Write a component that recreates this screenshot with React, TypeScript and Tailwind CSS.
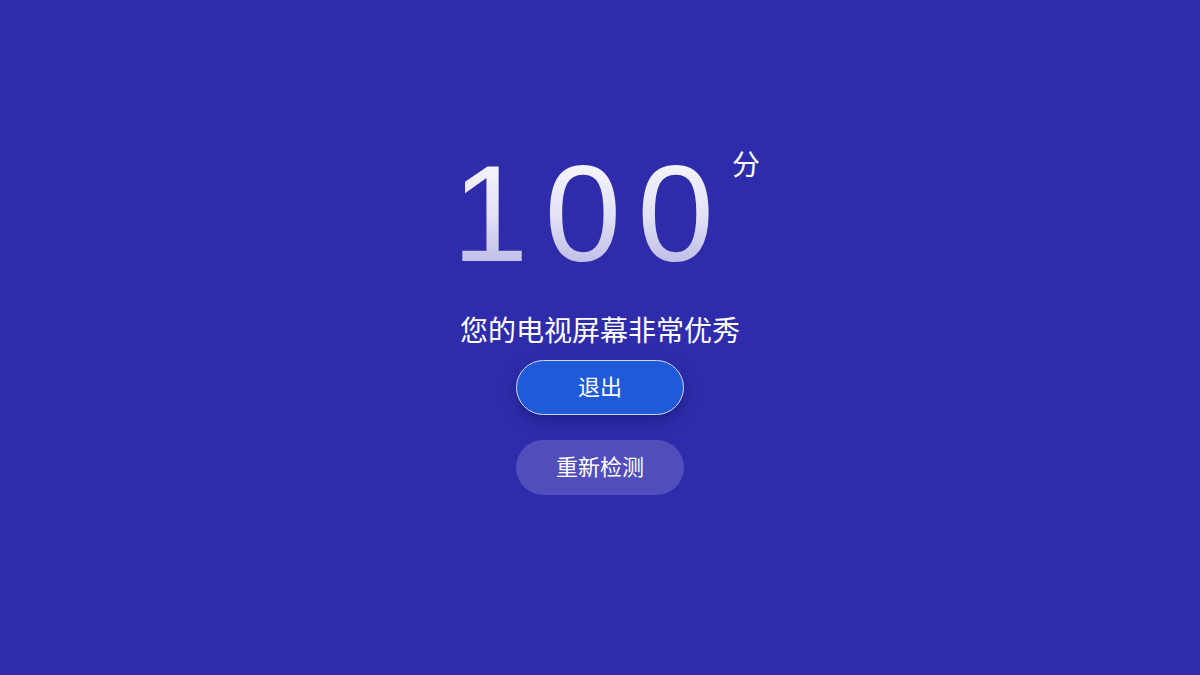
import React from "react";

export default function App() {
  return (
    <div
      className="w-[1200px] h-[675px] bg-[#2f2cab] flex flex-col items-center pt-[133px]"
      style={{ fontFamily: '"Liberation Sans", "Noto Sans CJK SC", sans-serif' }}
    >
      <div className="flex items-start ml-[12px]">
        <div className="text-[138px] leading-[160px] tracking-[16px] bg-gradient-to-b from-[#ffffff] via-[#e4e3f6] to-[#aba8de] bg-clip-text text-transparent">
          100
        </div>
        <div className="text-[28px] leading-[30px] text-white mt-[18px] ml-[2px]">分</div>
      </div>
      <div className="mt-[21px] text-[28px] leading-[36px] text-white">您的电视屏幕非常优秀</div>
      <div className="mt-[10px] flex flex-col gap-[25px]">
        <button className="w-[168px] h-[55px] rounded-full bg-[#1f5bd9] border-[1.5px] border-[#d0d8f5] text-white text-[22px] shadow-[0_6px_14px_rgba(10,10,80,0.35)]">
          退出
        </button>
        <button className="w-[168px] h-[55px] rounded-full bg-[#514dbb] text-white text-[22px]">
          重新检测
        </button>
      </div>
    </div>
  );
}
